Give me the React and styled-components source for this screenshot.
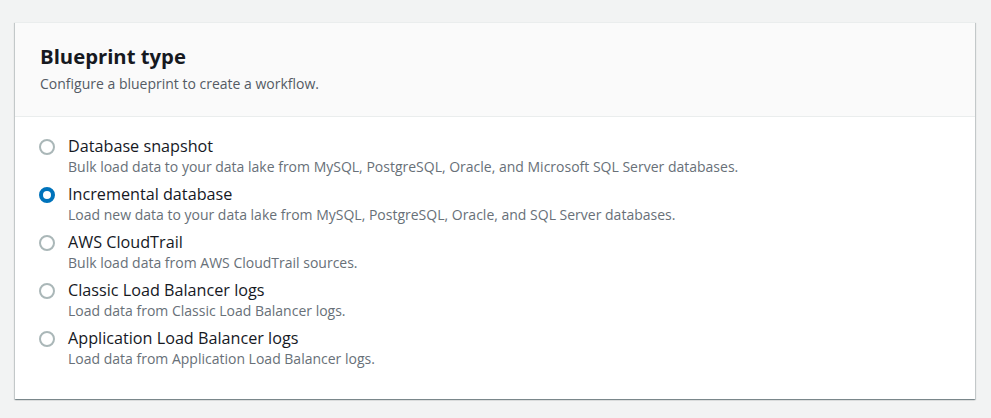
import React, { useState } from "react";
import styled, { createGlobalStyle } from "styled-components";

const Global = createGlobalStyle`
  html, body { margin: 0; padding: 0; background: #f2f3f3; }
  body { font-family: "Open Sans", "Noto Sans", sans-serif; -webkit-font-smoothing: antialiased; }
  * { box-sizing: border-box; }
`;

const Page = styled.div`
  padding: 22px 16px 19px 15px;
`;

const Card = styled.section`
  background: #fff;
  box-shadow: 0 1px 1px 0 rgba(0, 28, 36, 0.3), 1px 1px 1px 0 rgba(0, 28, 36, 0.15),
    -1px 1px 1px 0 rgba(0, 28, 36, 0.15);
  border-top: 1px solid #eaeded;
`;

const Header = styled.header`
  background: #fafafa;
  border-bottom: 1px solid #eaeded;
  padding: 19px 25px 22px 25px;
  display: flex;
  flex-direction: column;
  gap: 4px;
`;

const Title = styled.h2`
  margin: 0;
  font-size: 20.3px;
  line-height: 28px;
  font-weight: 700;
  color: #16191f;
`;

const Subtitle = styled.p`
  margin: 0;
  font-size: 14px;
  line-height: 20px;
  color: #545b64;
`;

const Body = styled.div`
  padding: 18px 25px 30px 24px;
  display: flex;
  flex-direction: column;
  gap: 6px;
`;

const Option = styled.label`
  display: grid;
  grid-template-columns: 16px 1fr;
  column-gap: 13px;
  cursor: pointer;
`;

const Radio = styled.span`
  width: 16px;
  height: 16px;
  margin-top: 4px;
  border-radius: 50%;
  border: ${(p) => (p.$checked ? "4px solid #0073bb" : "2px solid #aab7b8")};
  background: #fff;
`;

const Texts = styled.span`
  display: flex;
  flex-direction: column;
`;

const Label = styled.span`
  font-size: 16.2px;
  line-height: 22px;
  color: #16191f;
`;

const Desc = styled.span`
  font-size: 14px;
  line-height: 20px;
  color: #687078;
`;

const options = [
  {
    id: "snapshot",
    label: "Database snapshot",
    desc: "Bulk load data to your data lake from MySQL, PostgreSQL, Oracle, and Microsoft SQL Server databases.",
  },
  {
    id: "incremental",
    label: "Incremental database",
    desc: "Load new data to your data lake from MySQL, PostgreSQL, Oracle, and SQL Server databases.",
  },
  {
    id: "cloudtrail",
    label: "AWS CloudTrail",
    desc: "Bulk load data from AWS CloudTrail sources.",
  },
  {
    id: "clb",
    label: "Classic Load Balancer logs",
    desc: "Load data from Classic Load Balancer logs.",
  },
  {
    id: "alb",
    label: "Application Load Balancer logs",
    desc: "Load data from Application Load Balancer logs.",
  },
];

export default function App() {
  const [value, setValue] = useState("incremental");
  return (
    <>
      <Global />
      <Page>
        <Card>
          <Header>
            <Title>Blueprint type</Title>
            <Subtitle>Configure a blueprint to create a workflow.</Subtitle>
          </Header>
          <Body>
            {options.map((o) => (
              <Option key={o.id} onClick={() => setValue(o.id)}>
                <Radio $checked={value === o.id} />
                <Texts>
                  <Label>{o.label}</Label>
                  <Desc>{o.desc}</Desc>
                </Texts>
              </Option>
            ))}
          </Body>
        </Card>
      </Page>
    </>
  );
}
